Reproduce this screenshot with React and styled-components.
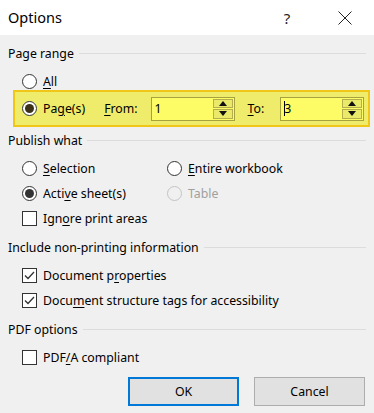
import styled, { createGlobalStyle } from "styled-components";

const GlobalStyle = createGlobalStyle`
  html, body {
    margin: 0;
    padding: 0;
    background: #f0f0f0;
  }
  * {
    box-sizing: border-box;
  }
`;

const Dialog = styled.div`
  width: 374px;
  height: 413px;
  display: flex;
  flex-direction: column;
  background: #f0f0f0;
  font-family: "Noto Sans", "Open Sans", sans-serif;
  font-size: 12.3px;
  color: #000;
  overflow: hidden;
`;

const TitleBar = styled.div`
  height: 35px;
  flex-shrink: 0;
  background: #fff;
  display: flex;
  align-items: center;
  padding: 0 6px 0 8px;
`;

const Title = styled.div`
  flex: 1;
  font-size: 14.5px;
  padding-bottom: 1px;
`;

const TitleButton = styled.div`
  width: ${(p) => p.w}px;
  margin-left: ${(p) => p.left || 0}px;
  height: 35px;
  display: flex;
  align-items: center;
  justify-content: center;
  font-size: 15px;
  color: #222;
`;

const Body = styled.div`
  flex: 1;
  padding: 0 8px;
  display: flex;
  flex-direction: column;
`;

const SectionHeader = styled.div`
  height: 20px;
  margin-top: ${(p) => p.top}px;
  display: flex;
  align-items: center;

  &::after {
    content: "";
    flex: 1;
    margin-left: 5px;
    border-top: 1px solid #dcdcdc;
  }
`;

const Options = styled.div`
  margin-top: ${(p) => p.top ?? 5.5}px;
  padding-left: 14px;
  display: grid;
  grid-template-columns: ${(p) => (p.cols === 2 ? "145px 1fr" : "1fr")};
  grid-auto-rows: ${(p) => p.row ?? 25}px;
  align-items: center;
`;

const Option = styled.label`
  display: flex;
  align-items: center;
  gap: 6px;
  color: ${(p) => (p.disabled ? "#a0a0a0" : "#000")};
  white-space: nowrap;
`;

const Radio = styled.span`
  width: 15px;
  height: 15px;
  border-radius: 50%;
  border: 1px solid ${(p) => (p.disabled ? "#c4c4c4" : "#333")};
  background: ${(p) => (p.disabled ? "#f0f0f0" : "#fff")};
  display: flex;
  align-items: center;
  justify-content: center;
  flex-shrink: 0;

  &::after {
    content: "";
    width: 9px;
    height: 9px;
    border-radius: 50%;
    background: ${(p) => (p.checked ? p.dot || "#333" : "transparent")};
  }
`;

const Check = styled.span`
  width: 15px;
  height: 15px;
  border: 1px solid #333;
  background: #fff;
  display: flex;
  align-items: center;
  justify-content: center;
  flex-shrink: 0;
`;

const Key = styled.span`
  text-decoration: underline;
  text-underline-offset: 2px;
`;

const Highlight = styled.div`
  margin-top: -1px;
  margin-left: 5px;
  margin-right: -4px;
  height: 37px;
  border: 2px solid #f0c619;
  background: #eeec6a;
  display: flex;
  align-items: center;
  padding-left: 7px;
`;

const FieldLabel = styled.span`
  margin-left: ${(p) => p.left}px;
`;

const Spin = styled.div`
  margin-left: ${(p) => p.left}px;
  width: 84px;
  height: 24px;
  border: 1px solid #a8a23e;
  background: #fdfc66;
  display: flex;
  align-items: stretch;
`;

const SpinText = styled.div`
  flex: 1;
  display: flex;
  align-items: center;
  padding-left: 3px;
`;

const Caret = styled.span`
  display: inline-block;
  width: 1px;
  height: 15px;
  background: #000;
  margin-right: -1px;
`;

const SpinButtons = styled.div`
  width: 20px;
  margin: 1px;
  display: flex;
  flex-direction: column;
  gap: 1px;
`;

const SpinButton = styled.div`
  flex: 1;
  border: 1px solid #b4ae4c;
  background: #ebe96a;
  display: flex;
  align-items: center;
  justify-content: center;
`;

const Footer = styled.div`
  margin-top: 7.5px;
  display: flex;
  justify-content: flex-end;
  gap: 15px;
  padding-right: 1px;
`;

const Button = styled.button`
  width: 111px;
  height: 29px;
  font-family: inherit;
  font-size: 12.3px;
  color: #000;
  background: #e1e1e1;
  border: ${(p) => (p.primary ? "2px solid #0078d7" : "1px solid #adadad")};
  padding: 0;
`;

const Tick = () => (
  <svg width="11" height="9" viewBox="0 0 11 9">
    <path d="M1 4.5 L4 7.5 L10 1" fill="none" stroke="#333" strokeWidth="1.3" />
  </svg>
);

const Arrow = ({ up }) => (
  <svg width="8" height="5" viewBox="0 0 8 5">
    <path d={up ? "M0 5 L4 0 L8 5 Z" : "M0 0 L4 5 L8 0 Z"} fill="#111" />
  </svg>
);

const Spinner = ({ left, children }) => (
  <Spin left={left}>
    <SpinText>{children}</SpinText>
    <SpinButtons>
      <SpinButton>
        <Arrow up />
      </SpinButton>
      <SpinButton>
        <Arrow />
      </SpinButton>
    </SpinButtons>
  </Spin>
);

const CloseIcon = () => (
  <svg width="14" height="14" viewBox="0 0 14 14">
    <path d="M0.5 0.5 L13.5 13.5 M13.5 0.5 L0.5 13.5" stroke="#222" strokeWidth="1" />
  </svg>
);

export default function App() {
  return (
    <>
      <GlobalStyle />
      <Dialog>
        <TitleBar>
          <Title>Options</Title>
          <TitleButton w={30}>?</TitleButton>
          <TitleButton w={46} left={20}>
            <CloseIcon />
          </TitleButton>
        </TitleBar>
        <Body>
          <SectionHeader top={8}>Page range</SectionHeader>
          <Options top={8} row={20}>
            <Option>
              <Radio />
              <span>
                <Key>A</Key>ll
              </span>
            </Option>
          </Options>
          <Highlight>
            <Radio checked dot="#3a3118" />
            <FieldLabel left={6}>
              Pa<Key>g</Key>e(s)
            </FieldLabel>
            <FieldLabel left={19}>
              <Key>F</Key>rom:
            </FieldLabel>
            <Spinner left={13}>1</Spinner>
            <FieldLabel left={13}>
              <Key>T</Key>o:
            </FieldLabel>
            <Spinner left={16}>
              <Caret />3
            </Spinner>
          </Highlight>

          <SectionHeader top={3}>Publish what</SectionHeader>
          <Options cols={2}>
            <Option>
              <Radio />
              <span>
                <Key>S</Key>election
              </span>
            </Option>
            <Option>
              <Radio />
              <span>
                <Key>E</Key>ntire workbook
              </span>
            </Option>
            <Option>
              <Radio checked />
              <span>
                Acti<Key>v</Key>e sheet(s)
              </span>
            </Option>
            <Option disabled>
              <Radio disabled />
              <span>Table</span>
            </Option>
            <Option>
              <Check />
              <span>
                Ign<Key>o</Key>re print areas
              </span>
            </Option>
          </Options>

          <SectionHeader top={6.5}>Include non-printing information</SectionHeader>
          <Options>
            <Option>
              <Check>
                <Tick />
              </Check>
              <span>
                Document p<Key>r</Key>operties
              </span>
            </Option>
            <Option>
              <Check>
                <Tick />
              </Check>
              <span>
                Docu<Key>m</Key>ent structure tags for accessibility
              </span>
            </Option>
          </Options>

          <SectionHeader top={6.5}>PDF options</SectionHeader>
          <Options>
            <Option>
              <Check />
              <span>
                PDF<Key>/</Key>A compliant
              </span>
            </Option>
          </Options>

          <Footer>
            <Button primary>OK</Button>
            <Button>Cancel</Button>
          </Footer>
        </Body>
      </Dialog>
    </>
  );
}
